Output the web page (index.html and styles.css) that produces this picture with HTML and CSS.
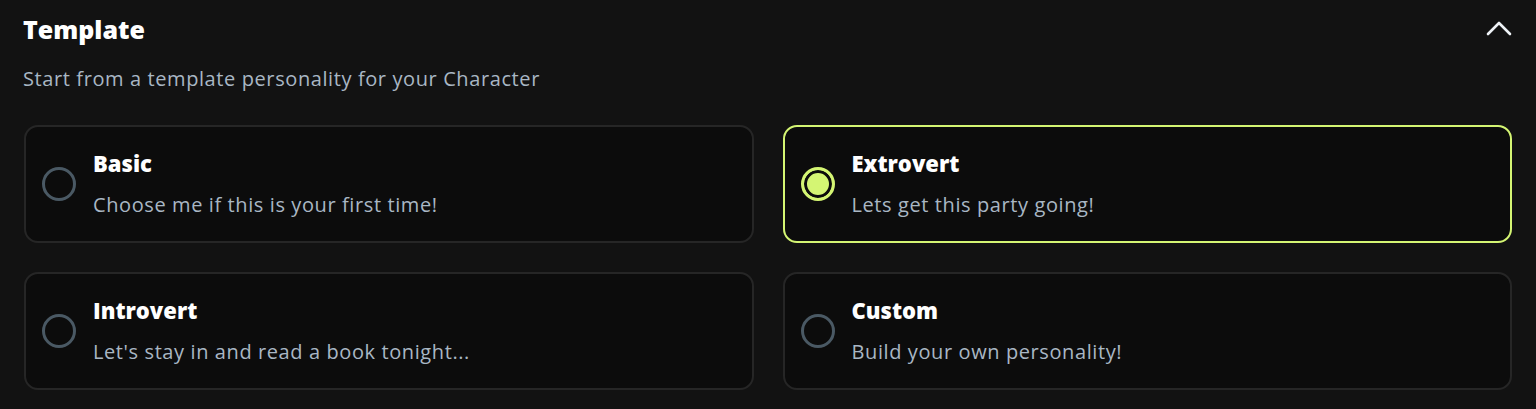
FILE: index.html
```html
<!DOCTYPE html>
<html lang="en">
	<head>
		<meta charset="UTF-8">
		<meta name="viewport" content="width=device-width, initial-scale=1">
		<title>Template</title>
		<link rel="stylesheet" href="styles.css">
	</head>
	<body>
		<section class="panel">
			<header class="panel-head">
				<h2>Template</h2>
				<button class="toggle" type="button" aria-label="Collapse">
					<svg width="26" height="16" viewBox="0 0 26 16"><polyline points="2,13 13,2 24,13" fill="none" stroke="#eef2f6" stroke-width="2.6" stroke-linecap="round" stroke-linejoin="round"/></svg>
				</button>
			</header>
			<p class="lead">Start from a template personality for your Character</p>

			<div class="options">
				<label class="option">
					<input type="radio" name="template" value="basic">
					<span class="text">
						<strong>Basic</strong>
						<small>Choose me if this is your first time!</small>
					</span>
				</label>
				<label class="option">
					<input type="radio" name="template" value="extrovert" checked>
					<span class="text">
						<strong>Extrovert</strong>
						<small>Lets get this party going!</small>
					</span>
				</label>
				<label class="option">
					<input type="radio" name="template" value="introvert">
					<span class="text">
						<strong>Introvert</strong>
						<small>Let's stay in and read a book tonight...</small>
					</span>
				</label>
				<label class="option">
					<input type="radio" name="template" value="custom">
					<span class="text">
						<strong>Custom</strong>
						<small>Build your own personality!</small>
					</span>
				</label>
			</div>
		</section>
	</body>
</html>
```
FILE: styles.css
```css
html,
body {
	margin: 0;
	background: #121212;
}
body {
	font-family: "Open Sans", Lato, sans-serif;
	color: #fff;
}
.panel {
	padding: 12px 24px 0 23px;
}
.panel-head {
	display: flex;
	align-items: center;
	justify-content: space-between;
	height: 34px;
}
.panel-head h2 {
	margin: 0;
	font-size: 25px;
	font-weight: 800;
}
.toggle {
	background: none;
	border: 0;
	padding: 0;
	display: flex;
}
.lead {
	margin: 19px 0 0;
	font-size: 20px;
	letter-spacing: .6px;
	color: #a9b7c4;
	line-height: 28px;
}
.options {
	display: grid;
	grid-template-columns: 1fr 1fr;
	gap: 29px 29px;
	margin-top: 32px;
	padding-left: 1px;
}
.option {
	display: flex;
	align-items: center;
	gap: 17px;
	height: 118px;
	box-sizing: border-box;
	padding: 0 16px;
	background: #0c0c0c;
	border: 2px solid #262626;
	border-radius: 14px;
	cursor: pointer;
}
.option:has(input:checked) {
	border-color: #d4f573;
}
.option input {
	appearance: none;
	margin: 0;
	width: 34px;
	height: 34px;
	flex: none;
	border: 3px solid #4a5964;
	border-radius: 50%;
	box-sizing: border-box;
}
.option input:checked {
	border-color: #d4f573;
	background: #d4f573;
	box-shadow: inset 0 0 0 3px #0c0c0c;
}
.text {
	display: flex;
	flex-direction: column;
	gap: 14px;
}
.text strong {
	font-size: 22px;
	font-weight: 800;
	line-height: 28px;
}
.text small {
	font-size: 20px;
	letter-spacing: .6px;
	color: #a9b7c4;
	line-height: 28px;
}
```
